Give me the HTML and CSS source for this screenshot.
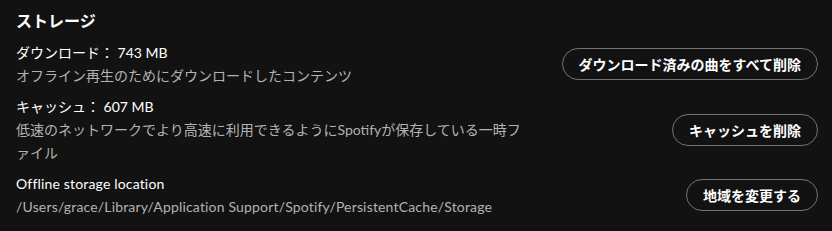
FILE: index.html
```html
<!DOCTYPE html>
<html lang="ja">
<head>
<meta charset="utf-8">
<link rel="stylesheet" href="styles.css">
</head>
<body>
<section class="storage">
  <h2 class="title">ストレージ</h2>
  <div class="rows">
    <div class="info">
      <div class="label">ダウンロード： 743 MB</div>
      <div class="desc">オフライン再生のためにダウンロードしたコンテンツ</div>
    </div>
    <button class="btn">ダウンロード済みの曲をすべて削除</button>

    <div class="info">
      <div class="label">キャッシュ： 607 MB</div>
      <div class="desc">低速のネットワークでより高速に利用できるようにSpotifyが保存している一時ファイル</div>
    </div>
    <button class="btn">キャッシュを削除</button>

    <div class="info latin">
      <div class="label">Offline storage location</div>
      <div class="desc">/Users/grace/Library/Application Support/Spotify/PersistentCache/Storage</div>
    </div>
    <button class="btn">地域を変更する</button>
  </div>
</section>
</body>
</html>
```

FILE: styles.css
```css
html, body {
  margin: 0;
  padding: 0;
  background: #121212;
}
body {
  font-family: Lato, "Noto Sans CJK JP", sans-serif;
  color: #fff;
  -webkit-font-smoothing: antialiased;
}
.storage {
  padding: 9px 14px 0 16px;
}
.title {
  margin: 0 0 8px;
  font-size: 16px;
  line-height: 24px;
  font-weight: 700;
  color: #fff;
}
.rows {
  display: grid;
  grid-template-columns: 1fr auto;
  column-gap: 36px;
  row-gap: 8px;
  align-items: center;
}
.info {
  font-size: 14px;
  line-height: 23px;
  line-break: normal;
}
.latin {
  letter-spacing: 0.17px;
}
.label {
  color: #fff;
}
.desc {
  color: #b3b3b3;
}
.btn {
  justify-self: end;
  font-family: "Noto Sans CJK JP", sans-serif;
  font-size: 14px;
  font-weight: 700;
  color: #fff;
  background: transparent;
  border: 1px solid #727272;
  border-radius: 999px;
  height: 32px;
  padding: 0 16px;
  line-height: 30px;
  cursor: pointer;
}
```
